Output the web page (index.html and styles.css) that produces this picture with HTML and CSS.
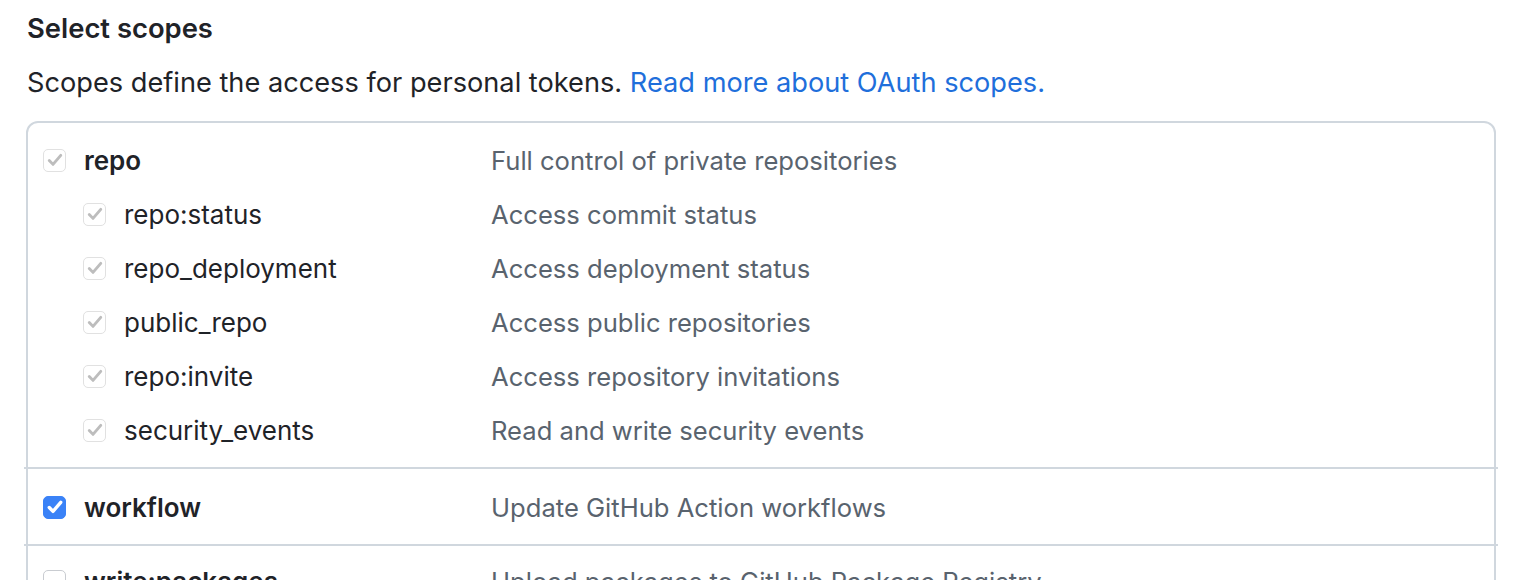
FILE: index.html
```html
<!DOCTYPE html>
<html>
<head>
<meta charset="utf-8">
<link rel="stylesheet" href="styles.css">
</head>
<body>
<div class="page">
  <h2 class="title">Select scopes</h2>
  <p class="intro">Scopes define the access for personal tokens. <a href="#" class="link">Read more about OAuth scopes.</a></p>
  <div class="scopes">
    <div class="group">
      <div class="row">
        <span class="cb cb-disabled"><svg viewBox="0 0 16 16"><path d="M3.4 8.4l3 3.1 6.2-7.2" /></svg></span>
        <span class="name strong">repo</span>
        <span class="desc">Full control of private repositories</span>
      </div>
      <div class="row nested">
        <span class="cb cb-disabled"><svg viewBox="0 0 16 16"><path d="M3.4 8.4l3 3.1 6.2-7.2" /></svg></span>
        <span class="name">repo:status</span>
        <span class="desc">Access commit status</span>
      </div>
      <div class="row nested">
        <span class="cb cb-disabled"><svg viewBox="0 0 16 16"><path d="M3.4 8.4l3 3.1 6.2-7.2" /></svg></span>
        <span class="name">repo_deployment</span>
        <span class="desc">Access deployment status</span>
      </div>
      <div class="row nested">
        <span class="cb cb-disabled"><svg viewBox="0 0 16 16"><path d="M3.4 8.4l3 3.1 6.2-7.2" /></svg></span>
        <span class="name">public_repo</span>
        <span class="desc">Access public repositories</span>
      </div>
      <div class="row nested">
        <span class="cb cb-disabled"><svg viewBox="0 0 16 16"><path d="M3.4 8.4l3 3.1 6.2-7.2" /></svg></span>
        <span class="name">repo:invite</span>
        <span class="desc">Access repository invitations</span>
      </div>
      <div class="row nested">
        <span class="cb cb-disabled"><svg viewBox="0 0 16 16"><path d="M3.4 8.4l3 3.1 6.2-7.2" /></svg></span>
        <span class="name">security_events</span>
        <span class="desc">Read and write security events</span>
      </div>
    </div>
    <div class="sep"></div>
    <div class="group group-single">
      <div class="row">
        <span class="cb cb-checked"><svg viewBox="0 0 16 16"><path d="M3.4 8.4l3 3.1 6.2-7.2" /></svg></span>
        <span class="name strong">workflow</span>
        <span class="desc">Update GitHub Action workflows</span>
      </div>
    </div>
    <div class="sep"></div>
    <div class="group group-last">
      <div class="row">
        <span class="cb"></span>
        <span class="name strong">write:packages</span>
        <span class="desc">Upload packages to GitHub Package Registry</span>
      </div>
    </div>
  </div>
</div>
</body>
</html>
```

FILE: styles.css
```css
html, body {
  margin: 0;
  padding: 0;
  background: #ffffff;
}

body {
  font-family: Inter, "Noto Sans", "Liberation Sans", sans-serif;
  color: #1f2328;
}

.page {
  padding: 11px 24px 0 26px;
}

.title {
  margin: 0 0 0 1px;
  font-size: 27.4px;
  font-weight: 600;
  line-height: 34px;
  color: #1f2328;
}

.intro {
  margin: 20px 0 0 1px;
  font-size: 27.2px;
  line-height: 36px;
  color: #1f2328;
}

.link {
  color: #1f6fdb;
  text-decoration: none;
}

.scopes {
  margin-top: 20px;
  width: 1466px;
  border: 2px solid #d0d7de;
  border-radius: 12px;
  height: 520px;
}

.group {
  padding: 10px 0 10px;
}

.group-single {
  padding: 11px 0 10px;
}

.group-last {
  padding: 8px 0 10px;
}

.sep {
  height: 2px;
  background: #d0d7de;
  margin: 0 -4px 0 -4px;
}

.row {
  display: flex;
  align-items: center;
  height: 54px;
  padding-left: 15px;
}

.row.nested {
  padding-left: 55px;
}

.cb {
  flex: none;
  width: 21px;
  height: 21px;
  border: 1px solid #c9ccd1;
  border-radius: 5px;
  background: #ffffff;
  display: flex;
  align-items: center;
  justify-content: center;
  box-sizing: content-box;
}

.cb svg {
  width: 20px;
  height: 20px;
  fill: none;
  stroke-width: 2.3;
  stroke-linecap: round;
  stroke-linejoin: round;
}

.cb-disabled {
  border-color: #e1e1e1;
}

.cb-disabled svg {
  stroke: #bdbdbd;
}

.cb-checked {
  background: #3a82f7;
  border-color: #3a82f7;
}

.cb-checked svg {
  stroke: #ffffff;
  stroke-width: 2.7;
}

.name {
  font-size: 26px;
  color: #1f2328;
  margin-left: 18px;
  flex: none;
}

.strong {
  font-weight: 600;
}

.desc {
  font-size: 25.6px;
  color: #59636e;
  margin-left: auto;
  width: 1003px;
}
```
